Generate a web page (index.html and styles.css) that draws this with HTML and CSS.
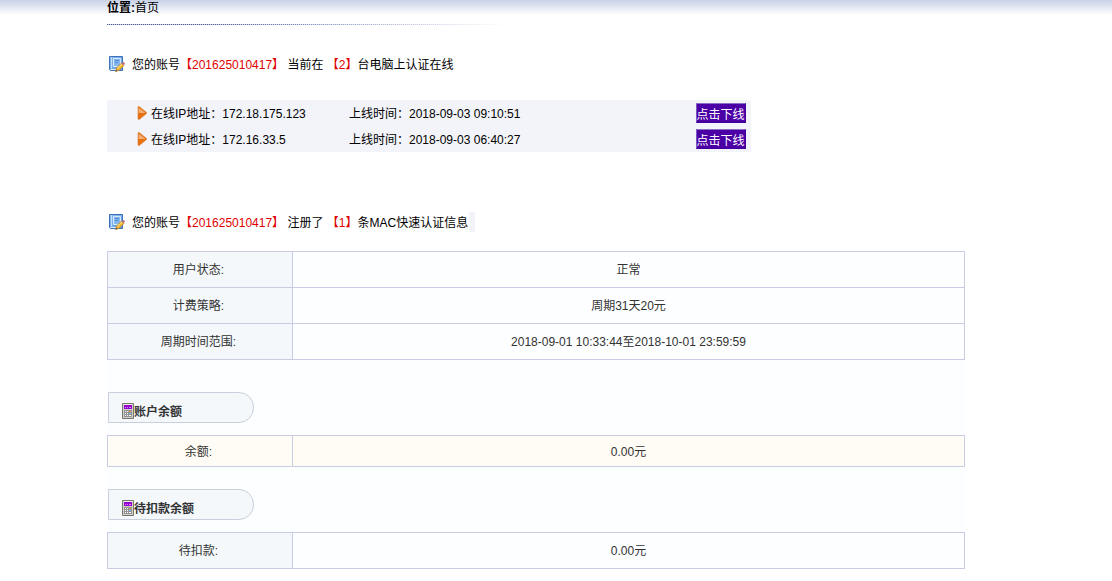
FILE: index.html
```html
<!DOCTYPE html>
<html lang="zh-CN">
<head>
<meta charset="utf-8">
<title>首页</title>
<link rel="stylesheet" href="styles.css">
</head>
<body>
<svg class="defs" width="0" height="0" aria-hidden="true">
  <linearGradient id="bookFill" x1="0" y1="0" x2="1" y2="1">
    <stop offset="0" stop-color="#8dbdf0"/><stop offset="1" stop-color="#5c9ae2"/>
  </linearGradient>
  <symbol id="note" viewBox="0 0 16 16">
    <path d="M.5 .5h13v14h-12l-1-1z" fill="url(#bookFill)" stroke="#3c70b8"/>
    <path d="M2.500 1v11.500" stroke="#c4ddf8"/>
    <path d="M1.500 13.500h9" stroke="#e4edf8"/>
    <path d="M4.500 2.500h7v8h-7z" fill="#86b6ee" stroke="#d6e8fc"/>
    <path d="M6 4.500h4M6 6.500h3" stroke="#4f8ad4"/>
    <path d="M6.500 15.500l1-3.500 5-5 2.500 2.500-5 5z" fill="#f6b62e" stroke="#b07a22" stroke-width=".6"/>
    <path d="M8.500 12.500l4.500-4.500" stroke="#ffe58b"/>
    <path d="M12.500 7.500l1.200-1.400c1-.8 2.700.8 2 1.900l-1.200 1.500z" fill="#b57688"/>
    <path d="M6.500 15.500l.6-2 1.500 1.400z" fill="#555"/>
  </symbol>
  <symbol id="arrow" viewBox="0 0 10 14">
    <path d="M1 1.500Q1 0 2.500 .7L9.500 6.500v1L2.500 13.300Q1 14 1 12.500z" fill="#e8700c"/>
    <path d="M1.500 1.500L8.500 7h-7z" fill="#f5ae75"/>
    <path d="M1 1.500Q1 0 2.500 .7L9.500 6.500v1L2.500 13.300Q1 14 1 12.500z" fill="none" stroke="#dc7a30" stroke-width=".6"/>
  </symbol>
  <symbol id="calc" viewBox="0 0 12 16">
    <path d="M.5 .5h11v15H.5z" fill="#d2d2ca" stroke="#77776f"/>
    <path d="M1.500 1.500h9" stroke="#f1f1ec"/>
    <path d="M2 2h8v4H2z" fill="#9500cf"/>
    <path d="M3 4.500h1M5 4.500h1M7 4.500h2" stroke="#d68bf5"/>
    <path d="M2 7h8v7H2z" fill="#929294"/>
    <path d="M3 8.500h1M5 8.500h1M3 10.500h1M5 10.500h1M3 12.500h1M5 12.500h1M7 12.500h2" stroke="#fff"/>
    <path d="M7 8.500h2" stroke="#f0a04b"/><path d="M7 10.500h2" stroke="#7cb9ee"/>
  </symbol>
</svg>
<main class="page">
  <nav class="crumb"><b>位置:</b>首页</nav>
  <p class="notice">
    <svg class="note-icon" aria-hidden="true"><use href="#note"/></svg>
    <span class="label">您的账号<em>【201625010417】</em> 当前在 <em>【2】</em>台电脑上认证在线</span>
  </p>
  <ul class="sessions">
    <li class="session">
      <svg class="arrow-icon" aria-hidden="true"><use href="#arrow"/></svg>
      <span class="label">在线IP地址：172.18.175.123</span>
      <span class="label">上线时间：2018-09-03 09:10:51</span>
      <button class="offline" type="button">点击下线</button>
    </li>
    <li class="session">
      <svg class="arrow-icon" aria-hidden="true"><use href="#arrow"/></svg>
      <span class="label">在线IP地址：172.16.33.5</span>
      <span class="label">上线时间：2018-09-03 06:40:27</span>
      <button class="offline" type="button">点击下线</button>
    </li>
  </ul>
  <p class="notice notice-mac">
    <svg class="note-icon" aria-hidden="true"><use href="#note"/></svg>
    <span class="label">您的账号<em>【201625010417】</em> 注册了 <em>【1】</em>条MAC快速认证信息</span>
    <span class="notice-end"></span>
  </p>
  <section class="account">
    <table class="info">
      <tr><th scope="row">用户状态:</th><td>正常</td></tr>
      <tr><th scope="row">计费策略:</th><td>周期31天20元</td></tr>
      <tr><th scope="row">周期时间范围:</th><td>2018-09-01 10:33:44至2018-10-01 23:59:59</td></tr>
    </table>
    <h2 class="tab tab-first"><svg class="calc-icon" aria-hidden="true"><use href="#calc"/></svg><span class="label">账户余额</span></h2>
    <table class="info info-balance">
      <tr><th scope="row">余额:</th><td>0.00元</td></tr>
    </table>
    <h2 class="tab"><svg class="calc-icon" aria-hidden="true"><use href="#calc"/></svg><span class="label">待扣款余额</span></h2>
    <table class="info">
      <tr><th scope="row">待扣款:</th><td>0.00元</td></tr>
    </table>
  </section>
</main>
</body>
</html>
```
FILE: styles.css
```css
* { box-sizing: border-box; }
body {
  margin: 0;
  background: #fff linear-gradient(#c8d2e8, #fff) 0 0 / 100% 15px no-repeat;
  color: #000;
  font: 12px/18px "Liberation Sans", "Noto Sans CJK SC", sans-serif;
}
.defs { position: absolute; }
.page { padding: 0 147px 12px 107px; }
.label { padding-top: 2px; }
.crumb { height: 25px; line-height: 16px; position: relative; }
.crumb::after {
  content: "";
  position: absolute;
  left: 0;
  bottom: 0;
  width: 400px;
  height: 1px;
  background: repeating-linear-gradient(90deg, #4a5c9c 0 1px, #c5cce2 1px 2px);
  -webkit-mask-image: linear-gradient(90deg, #000 25%, transparent);
  mask-image: linear-gradient(90deg, #000 25%, transparent);
}
.notice {
  display: flex;
  align-items: center;
  height: 20px;
  margin: 29px 0 0;
}
.notice em { color: #e00000; font-style: normal; }
.note-icon { width: 16px; height: 16px; margin: 0 7px 0 2px; }
.notice-mac { margin-top: 60px; }
.notice-end { width: 6px; height: 20px; margin-left: 1px; background: #f3f4fa; }
.sessions {
  width: 75%;
  margin: 26px 0 0;
  padding: 0;
  background: #f3f4fa;
  list-style: none;
}
.session {
  display: grid;
  grid-template-columns: 14px 198px 1fr auto;
  align-items: center;
  height: 26px;
  padding: 0 5px 0 30px;
}
.arrow-icon { width: 10px; height: 14px; }
.offline {
  width: 50px;
  height: 20px;
  padding: 2px 0 0;
  border: 1px solid #43009c;
  border-top-color: #8a6fc5;
  border-left-color: #7a55bd;
  background: #4b00a5;
  color: #fff;
  font: inherit;
  white-space: nowrap;
}
.account { margin-top: 19px; background: #fdfeff; color: #333; }
.info {
  width: 100%;
  border-collapse: collapse;
  table-layout: fixed;
}
.info th, .info td {
  height: 36px;
  padding: 0;
  border: 1px solid #c9cde3;
  font-weight: 400;
  text-align: center;
}
.info th { width: 185px; background: #f4f8fa; padding-right: 3px; }
.info-balance th, .info-balance td { height: 31px; padding-top: 2px; background: #fffcf5; }
.tab {
  display: flex;
  align-items: center;
  width: 146px;
  height: 31px;
  margin: 22px 0 12px 1px;
  padding: 6px 0 0 13px;
  border: 1px solid #c9d0dc;
  border-radius: 0 15px 15px 0;
  background: #f4f8fb;
  font-size: 12px;
}
.tab-first { margin-top: 32px; }
.calc-icon { width: 12px; height: 16px; }
```
